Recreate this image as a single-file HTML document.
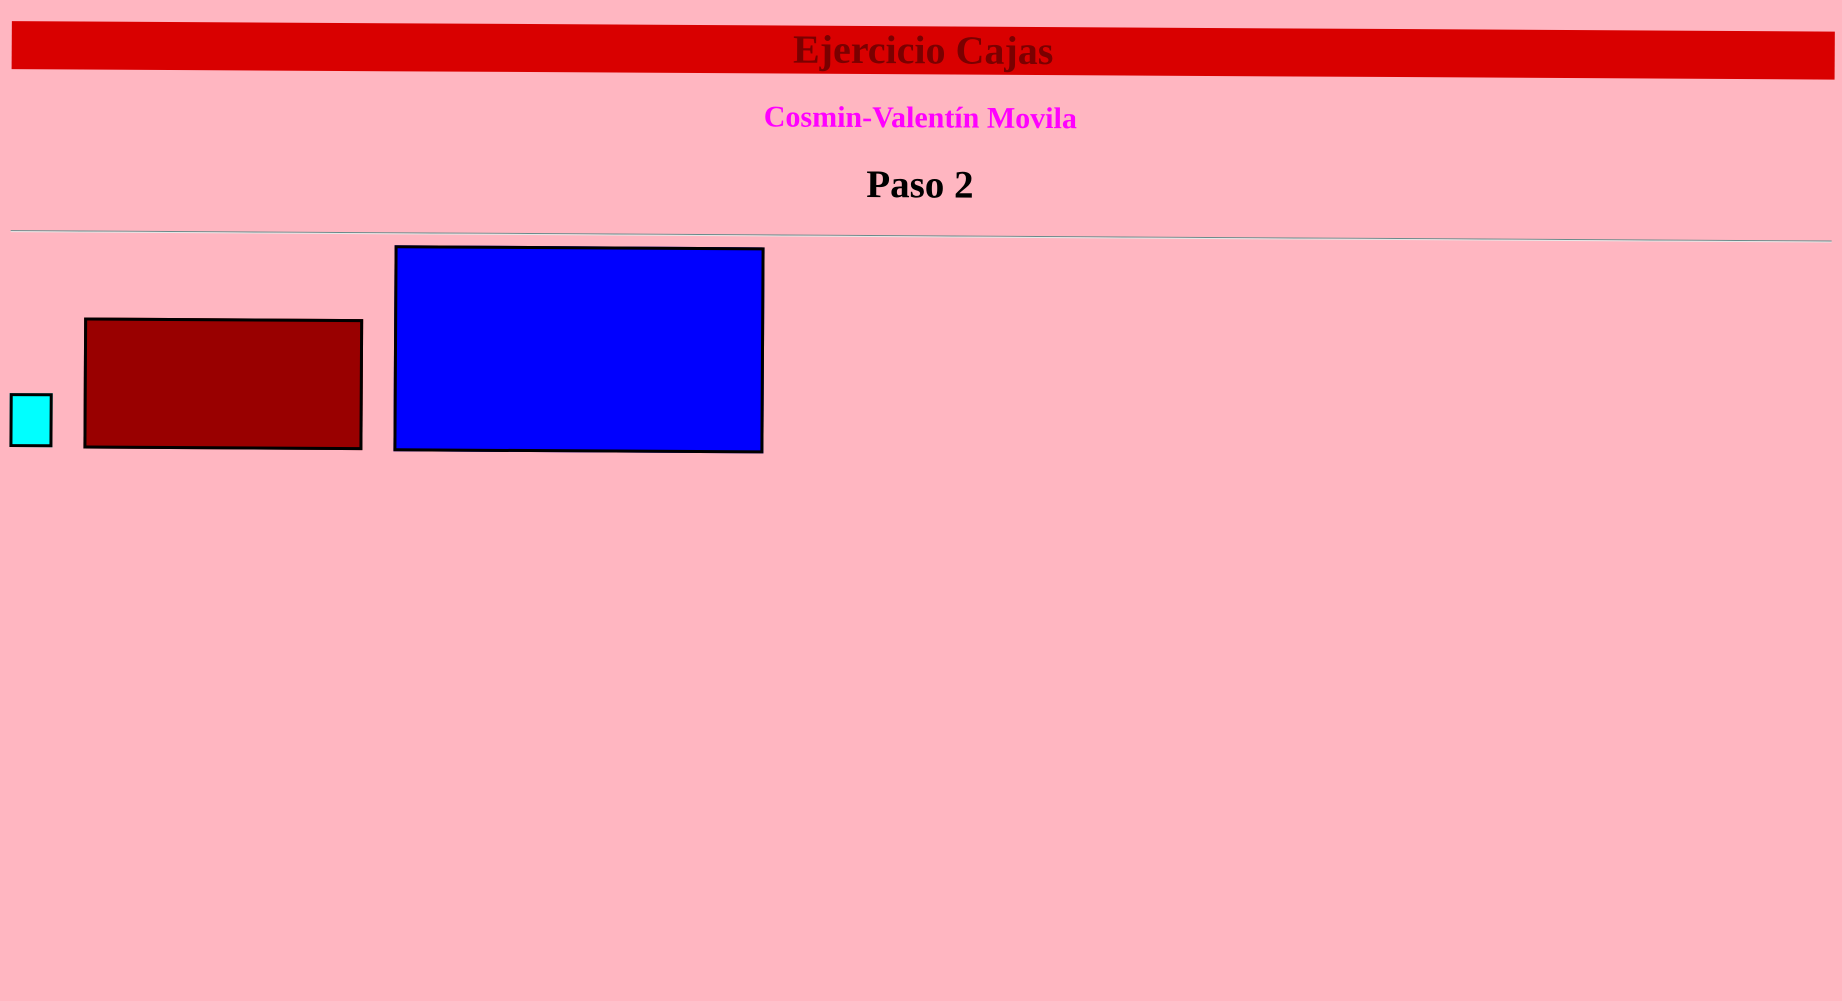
<!DOCTYPE html>
<html><head><meta charset="utf-8"><style>
html,body{margin:0;padding:0;width:1842px;height:990px;background:#ffb6c1;overflow:hidden;font-family:"Liberation Serif",serif;}
#w{position:absolute;left:0;top:0;width:1842px;height:990px;transform:rotate(0.33deg);transform-origin:0 0;}
.hdr{position:absolute;left:12px;top:21px;width:1823px;height:48px;background:#d90000;text-align:center;font-weight:bold;font-size:40px;line-height:48px;color:#7a0000;}
.au{position:absolute;left:0;width:1842px;top:95px;text-align:center;color:#ff00ff;font-weight:bold;font-size:30px;line-height:36px;}
.p2{position:absolute;left:0;width:1842px;top:158px;text-align:center;color:#000;font-weight:bold;font-size:39px;line-height:44px;}
.hr{position:absolute;left:12px;top:230px;width:1821px;height:0;border-top:1px solid #6a8a8a;border-bottom:1px solid #e8e8e8;}
.b{position:absolute;border:3px solid #000;box-sizing:border-box;}
</style></head><body><div id="w">
<div class="hdr">Ejercicio Cajas</div>
<div class="au">Cosmin-Valentín Movila</div>
<div class="p2">Paso 2</div>
<div class="hr"></div>
<div class="b" style="left:12px;top:393px;width:43px;height:54px;background:#00ffff"></div>
<div class="b" style="left:86px;top:317px;width:279px;height:131px;background:#990000"></div>
<div class="b" style="left:396px;top:243px;width:370px;height:206px;background:#0000ff"></div>
</div></body></html>
